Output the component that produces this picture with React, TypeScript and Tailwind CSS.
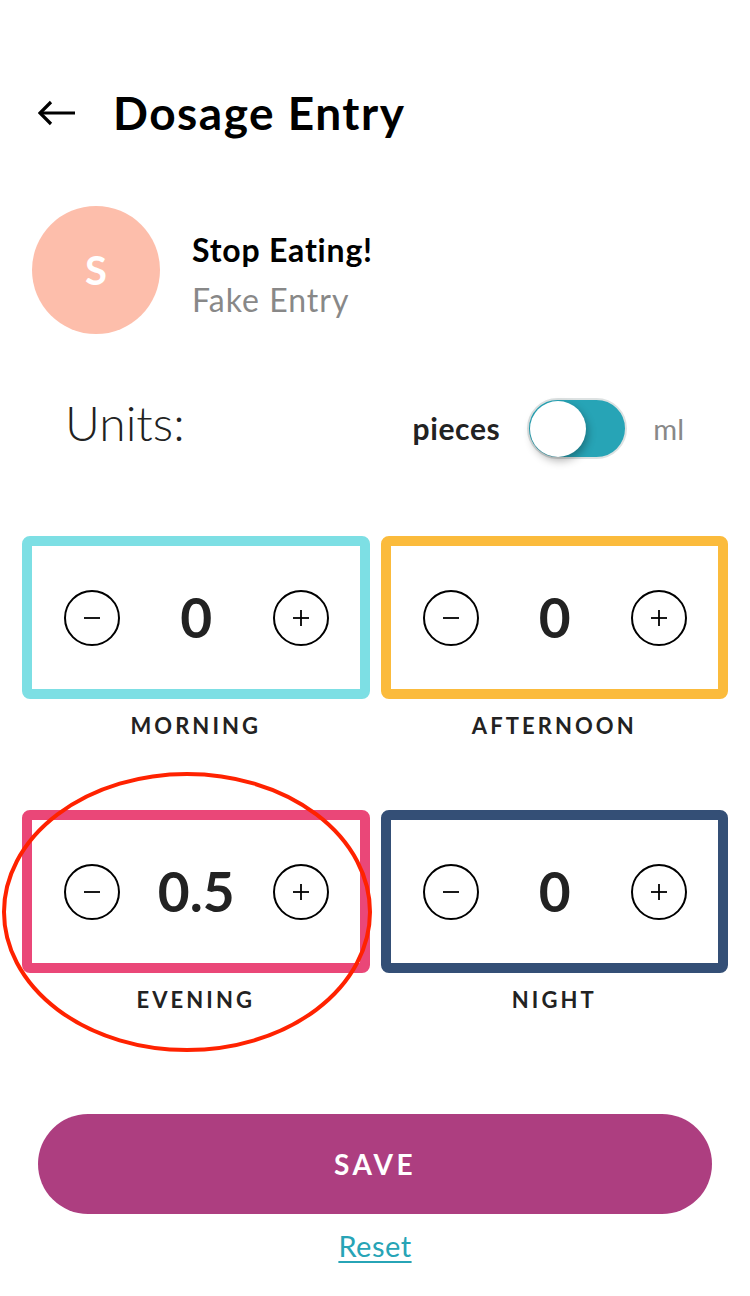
import React from 'react';

type Slot = { id: string; label: string; value: string; border: string };

const slots: Slot[] = [
  { id: 'morning', label: 'MORNING', value: '0', border: 'border-[#7ddfe4]' },
  { id: 'afternoon', label: 'AFTERNOON', value: '0', border: 'border-[#fbbb3c]' },
  { id: 'evening', label: 'EVENING', value: '0.5', border: 'border-[#ea4778]' },
  { id: 'night', label: 'NIGHT', value: '0', border: 'border-[#344f76]' },
];

function RoundButton({ plus }: { plus?: boolean }) {
  return (
    <button className="w-[56px] h-[56px] rounded-full border-2 border-black flex items-center justify-center shrink-0">
      <svg width="20" height="20" viewBox="0 0 20 20" fill="none" stroke="black" strokeWidth="1.8">
        <line x1="2" y1="10" x2="18" y2="10" />
        {plus && <line x1="10" y1="2" x2="10" y2="18" />}
      </svg>
    </button>
  );
}

function DoseCard({ slot }: { slot: Slot }) {
  return (
    <div className="flex flex-col items-center">
      <div
        className={`w-full h-[163px] border-[10px] rounded-[8px] ${slot.border} flex items-center justify-between pl-[32px] pr-[31px]`}
      >
        <RoundButton />
        <span className="text-[55px] font-bold text-[#222] leading-none">{slot.value}</span>
        <RoundButton plus />
      </div>
      <span className="mt-[13px] h-[28px] leading-[28px] text-[22px] font-bold tracking-[0.14em] text-[#222]">
        {slot.label}
      </span>
    </div>
  );
}

export default function App() {
  return (
    <div className="relative w-[750px] min-h-[1296px] bg-white flex flex-col font-['Lato','Open_Sans',sans-serif]">
      {/* Header */}
      <div className="mt-[88px] h-[50px] flex items-center pl-[38px]">
        <svg width="38" height="26" viewBox="0 0 38 26" fill="none" stroke="black" strokeWidth="3.2">
          <line x1="2" y1="13" x2="37" y2="13" />
          <polyline points="13,2 2,13 13,24" />
        </svg>
        <h1 className="ml-[37px] text-[46px] font-bold text-black leading-none tracking-[1.5px]">Dosage Entry</h1>
      </div>

      {/* Medicine */}
      <div className="mt-[68px] h-[128px] flex items-center pl-[32px]">
        <div className="w-[128px] h-[128px] rounded-full bg-[#fdbeab] flex items-center justify-center">
          <span className="text-white text-[40px] font-bold">S</span>
        </div>
        <div className="ml-[32px] flex flex-col pt-[10px]">
          <span className="text-[32px] font-bold text-black leading-[40px] tracking-[0.8px]">Stop Eating!</span>
          <span className="mt-[10px] text-[32px] text-[#888] leading-[40px] tracking-[1px]">Fake Entry</span>
        </div>
      </div>

      {/* Units */}
      <div className="mt-[64px] h-[61px] flex items-center justify-between pl-[65px] pr-[66px]">
        <span className="text-[48px] font-light text-[#222] leading-none -mt-[12px]">Units:</span>
        <div className="flex items-center">
          <span className="text-[30px] font-bold text-[#222] tracking-[0.6px]">pieces</span>
          <div className="ml-[27px] w-[100px] h-[61px] rounded-full bg-[#27a4b6] border-2 border-[#dde2e2] flex items-center px-[1px]">
            <div className="w-[56px] h-[56px] rounded-full bg-white shadow-[2px_4px_8px_rgba(0,0,0,0.3)]" />
          </div>
          <span className="ml-[26px] text-[29px] text-[#888]">ml</span>
        </div>
      </div>

      {/* Dose grid */}
      <div className="mt-[77px] px-[22px] grid grid-cols-2 gap-x-[11px] gap-y-[70px]">
        {slots.map((s) => (
          <DoseCard key={s.id} slot={s} />
        ))}
      </div>

      {/* Actions */}
      <button className="mt-[100px] mx-[38px] h-[100px] rounded-full bg-[#ad3e80] text-white text-[28px] font-bold tracking-[0.12em]">
        SAVE
      </button>
      <a className="mt-[17px] self-center h-[30px] leading-[30px] text-[29px] text-[#27a4b6] underline underline-offset-4 tracking-[0.5px]">
        Reset
      </a>

      {/* Annotation ellipse */}
      <svg className="absolute left-0 top-0 pointer-events-none" width="750" height="1296" viewBox="0 0 750 1296">
        <ellipse cx="187" cy="912" rx="183" ry="138" fill="none" stroke="#ff2200" strokeWidth="4" />
      </svg>
    </div>
  );
}
